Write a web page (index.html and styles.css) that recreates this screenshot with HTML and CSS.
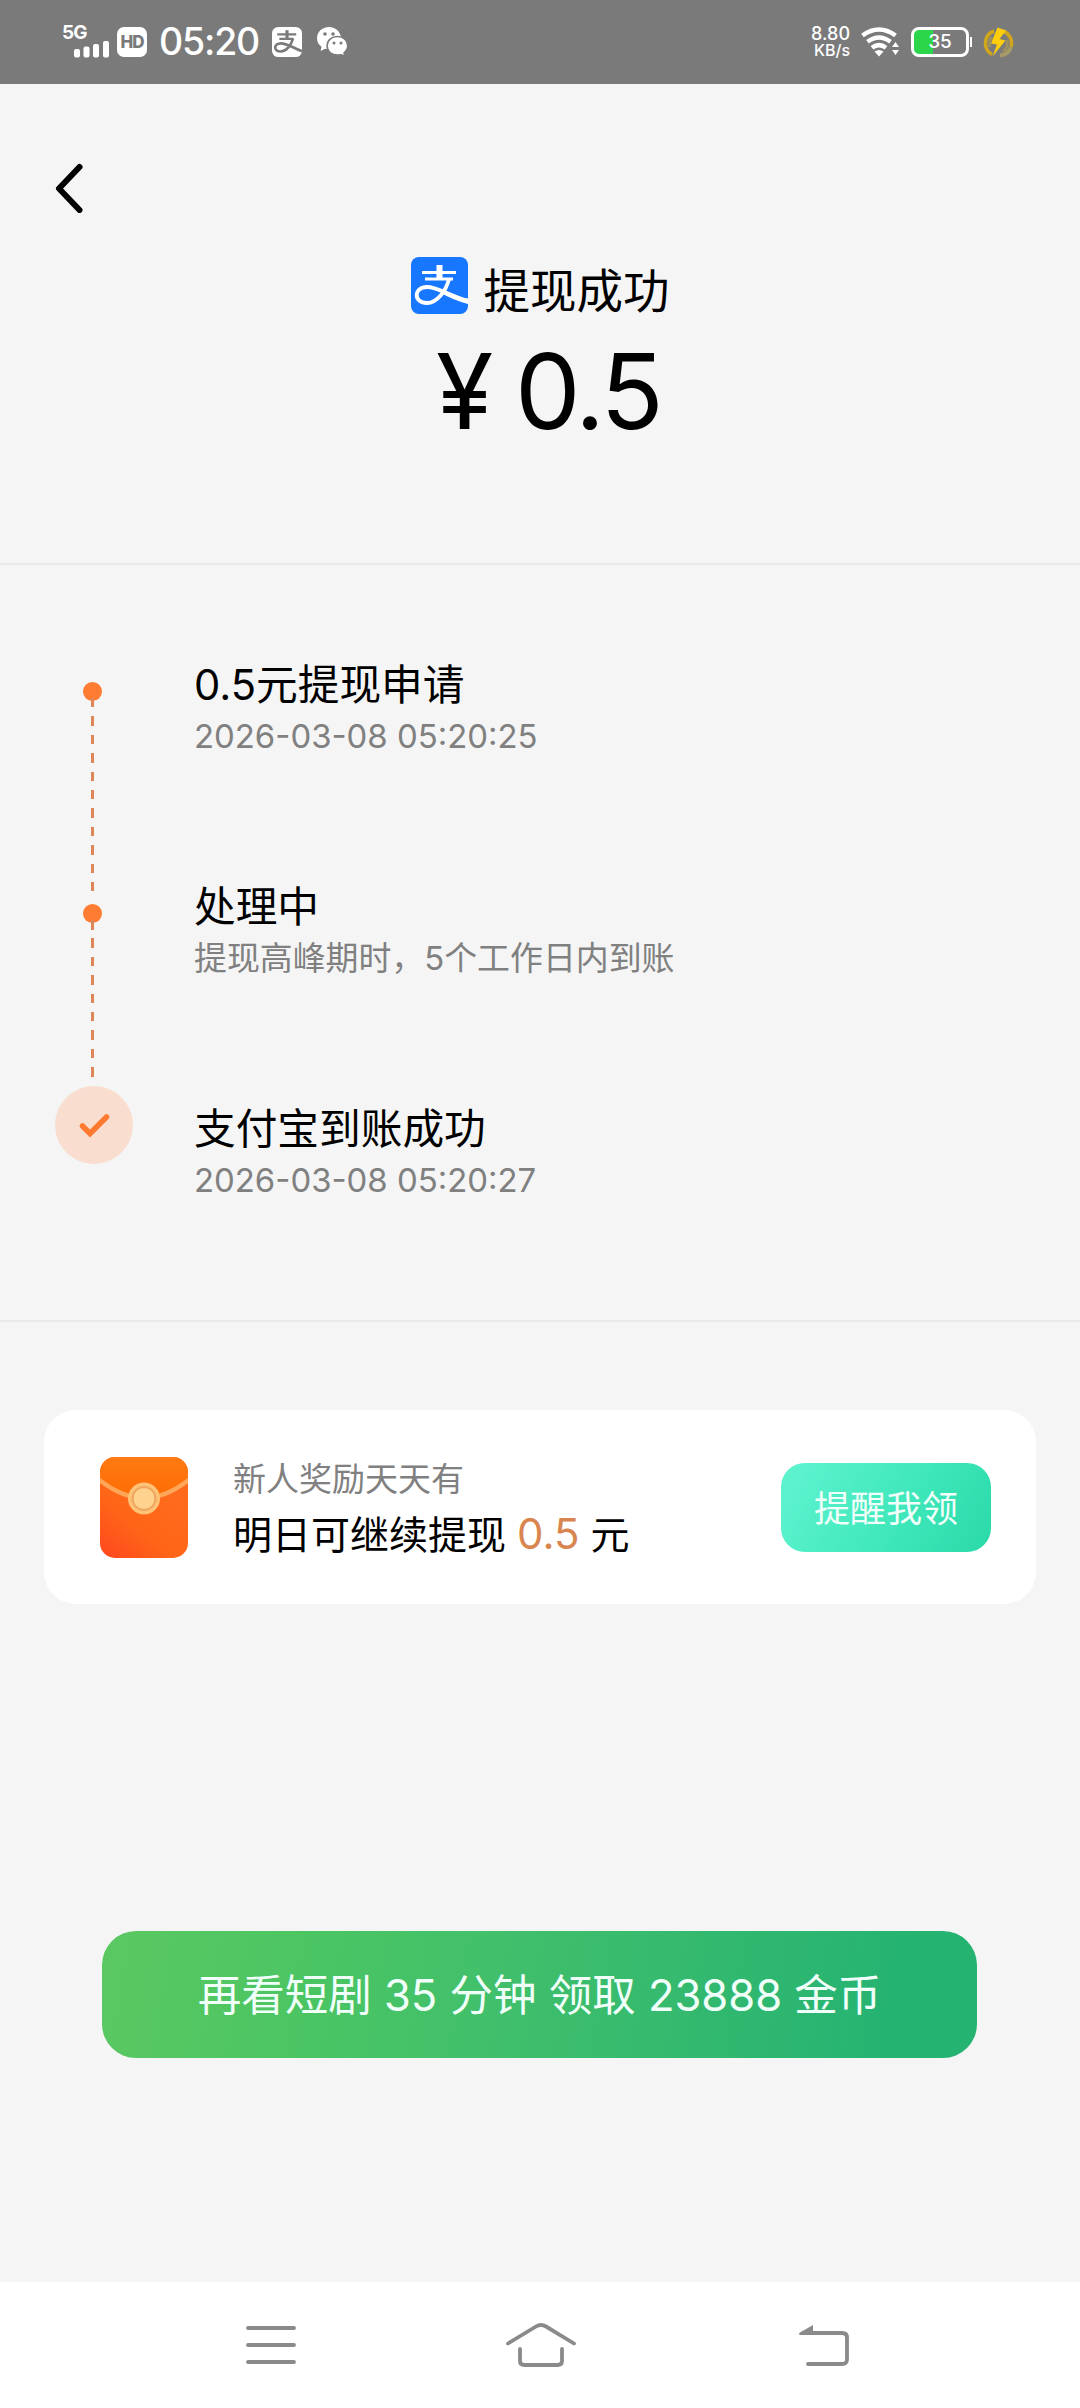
FILE: index.html
```html
<!DOCTYPE html>
<html lang="zh-CN">
<head>
<meta charset="utf-8">
<title>提现成功</title>
<link rel="stylesheet" href="styles.css">
</head>
<body>
<header class="status">
  <div class="status-left">
    <div class="cell">
      <span class="cell-type">5G</span>
      <svg class="cell-bars" width="36" height="17" viewBox="0 0 36 17" fill="#fff"><rect x="0" y="8" width="6" height="8.500" rx="2"/><rect x="9.500" y="5.500" width="6" height="11" rx="2"/><rect x="19" y="3" width="6" height="13.500" rx="2"/><rect x="29" y="0" width="6" height="16.500" rx="2"/></svg>
    </div>
    <span class="hd">HD</span>
    <span class="clock">05:20</span>
    <svg class="pay-mini" width="30" height="30" viewBox="0 0 57 57"><rect width="57" height="57" rx="12" fill="#fff"/><g fill="none" stroke="#7a7a7a"><path d="M28.500 6v15" stroke-width="6"/><path d="M10 14h36M14 22.500h27" stroke-width="4"/><path d="M40 22C36 35 27 46.500 16.500 46.500C2 46.500 3 31 17 31C29 31 38 39 57 46" stroke-width="5"/></g></svg>
    <svg class="wechat" width="31" height="30" viewBox="0 0 31 30"><path fill="#fff" d="M12 0C5 0 0 5 0 11.300c0 3.700 1.800 6.500 4.500 8.500L3.600 24l4.500-2.300c1.200.3 2.500.5 3.900.5 7 0 12-4.800 12-10.900S18.600 0 12 0z"/><path fill="#fff" stroke="#7a7a7a" stroke-width="1.500" d="M20.500 9.500c6 0 10.200 4 10.200 9.300 0 3-1.500 5.300-3.700 7l.8 3.700-3.800-1.900c-1.100.3-2.300.5-3.500.5-6 0-10.400-4-10.400-9.300s4.400-9.300 10.400-9.300z"/><g fill="#7a7a7a"><circle cx="8" cy="7" r="1.800"/><circle cx="16" cy="7" r="1.800"/><circle cx="17" cy="16" r="1.500"/><circle cx="24" cy="16" r="1.500"/></g></svg>
  </div>
  <div class="status-right">
    <div class="speed"><span>8.80</span><span class="unit">KB/s</span></div>
    <svg class="wifi" width="38" height="30" viewBox="0 0 38 30"><g fill="none" stroke="#fff" stroke-width="4.500"><path d="M1.500 8.500Q18 -3.500 34.500 8.500"/><path d="M6.500 14.800Q18 6.300 29.500 14.800"/><path d="M11 20.800Q18 15.500 25 20.800"/></g><path fill="#fff" d="M13.500 24.500Q18 21.500 22.500 24.500L18 29.500zM34.500 15l3.500 5h-7zM34.500 28l3.500-5h-7z"/></svg>
    <div class="battery"><span>35</span></div>
    <svg class="bolt" width="31" height="32" viewBox="0 0 31 32"><path d="M11 5A13 13 0 0 0 9 28.500M20 5A13 13 0 0 1 28 21" fill="none" stroke="#cfa61c" stroke-width="3.500"/><path d="M28 21A13 13 0 0 1 17 29.500" fill="none" stroke="#a69a66" stroke-width="4"/><path d="M7 21A9.500 9.500 0 0 1 9 11M24 14a9.500 9.500 0 0 1-4 11" fill="none" stroke="#9d9060" stroke-width="3"/><path fill="#fdce0e" d="M14.500 1.500L8 17.500l6 1L9.500 30.500l13-16-6-1.500 6.500-8.500z"/></svg>
  </div>
</header>

<main>
  <section class="summary">
    <svg class="back" width="28" height="50" viewBox="0 0 28 50"><path d="M24.500 4L4 25.500l20.500 21.500" fill="none" stroke="#000" stroke-width="6" stroke-linecap="round" stroke-linejoin="round"/></svg>
    <div class="headline">
      <svg class="pay" width="57" height="57" viewBox="0 0 57 57"><rect width="57" height="57" rx="8" fill="#1777ff"/><g fill="none" stroke="#fff"><path d="M28.500 8v13" stroke-width="6"/><path d="M11 15.500h34" stroke-width="3"/><path d="M14 22h28" stroke-width="3"/><path d="M38 22C35 34 26 46 16 46C2 46 2.500 30 16 30C27 30 36 38 57 44" stroke-width="3.800"/><path d="M32 34.500Q42 40 57 41.500V47Q42 43 30 36z" fill="#fff" stroke="none"/></g></svg>
      <h1>提现成功</h1>
    </div>
    <p class="amount"><span class="yen">¥</span>0.5</p>
  </section>

  <section class="steps">
    <div class="step">
      <div class="rail"><i class="dot"></i><i class="dash"></i></div>
      <div class="info"><h2>0.5元提现申请</h2><p>2026-03-08 05:20:25</p></div>
    </div>
    <div class="step">
      <div class="rail"><i class="dot"></i><i class="dash short"></i></div>
      <div class="info"><h2>处理中</h2><p>提现高峰期时，5个工作日内到账</p></div>
    </div>
    <div class="step last">
      <div class="rail"><svg class="done" width="78" height="78" viewBox="0 0 78 78"><circle cx="39" cy="39" r="39" fill="#f9ddce"/><path d="M27.500 40l7.500 7.500L51.500 31" fill="none" stroke="#ff7a30" stroke-width="5.500" stroke-linecap="round"/></svg></div>
      <div class="info"><h2>支付宝到账成功</h2><p>2026-03-08 05:20:27</p></div>
    </div>
  </section>

  <section class="card">
    <svg class="envelope" width="88" height="101" viewBox="0 0 88 101">
      <defs>
        <linearGradient id="body" x1="0" y1="1" x2=".6" y2=".2"><stop offset="0" stop-color="#ff4720"/><stop offset=".5" stop-color="#ff6517"/><stop offset="1" stop-color="#ff6a1c"/></linearGradient>
        <linearGradient id="flap" x1="0" y1="0" x2="0" y2="1"><stop offset="0" stop-color="#ff7a12"/><stop offset="1" stop-color="#ff6c05"/></linearGradient>
        <clipPath id="shape"><rect width="88" height="101" rx="15"/></clipPath>
      </defs>
      <g clip-path="url(#shape)"><rect width="88" height="101" fill="url(#body)"/><path d="M0 0h88v23Q66 41 44 41T0 23z" fill="url(#flap)"/><path d="M-2 22Q22 41 44 41T90 22" fill="none" stroke="#ffa659" stroke-width="4.500"/></g>
      <circle cx="44" cy="41.500" r="16" fill="#ffc277"/><circle cx="44" cy="41.500" r="11.500" fill="#ffd28d" stroke="#eda65e" stroke-width="2"/>
    </svg>
    <div class="reward"><p class="note">新人奖励天天有</p><p class="next">明日可继续提现 <b>0.5</b> 元</p></div>
    <button class="remind">提醒我领</button>
  </section>

  <button class="watch">再看短剧 35 分钟 领取 23888 金币</button>
</main>

<nav class="nav">
  <svg width="50" height="40" viewBox="0 0 50 40"><path d="M2 3h46M2 20h46M2 37h46" fill="none" stroke="#8a8a8a" stroke-width="3.800" stroke-linecap="round"/></svg>
  <svg class="home" width="72" height="46" viewBox="0 0 72 46"><g fill="none" stroke="#8a8a8a" stroke-width="3.800" stroke-linecap="round"><path d="M3 21.500L31 4.500Q36 1.500 41 4.500L69 21.500"/><path d="M15 27v12q0 4 4.500 4h33q4.500 0 4.500-4V27"/></g></svg>
  <svg width="52" height="44" viewBox="0 0 52 44"><path d="M5 10h39q5 0 5 4.500v22q0 4.500-5 4.500H10" fill="none" stroke="#8a8a8a" stroke-width="3.800" stroke-linecap="round"/><path d="M15 2v10H2q-2-1 0-2.500z" fill="#8a8a8a"/></svg>
</nav>
</body>
</html>
```

FILE: styles.css
```css
* { box-sizing: border-box; margin: 0; padding: 0; }

body {
  width: 1080px;
  height: 2408px;
  display: flex;
  flex-direction: column;
  background: #f5f5f5;
  color: #000;
  font-family: Inter, "Noto Sans CJK SC", sans-serif;
}

svg { display: block; flex: none; }
h1, h2, b { font-weight: 400; }
button { border: 0; font-family: inherit; color: #f0fffa; white-space: nowrap; }

.status {
  height: 84px;
  padding: 0 66px 0 62px;
  display: flex;
  justify-content: space-between;
  background: #7a7a7a;
  color: #fff;
}
.status-left, .status-right { display: flex; align-items: center; }
.cell { width: 48px; height: 34px; display: flex; flex-direction: column; align-items: flex-end; margin-right: 7px; }
.cell-type { align-self: flex-start; height: 16px; font-size: 19px; line-height: 16px; font-weight: 700; letter-spacing: -1px; }
.hd {
  width: 30px; height: 30px; border-radius: 7px; background: #fff; color: #7a7a7a;
  font-size: 17px; line-height: 30px; font-weight: 800; text-align: center; letter-spacing: -1px;
}
.clock { width: 98px; margin: 0 15px 0 12px; font-size: 37.5px; line-height: 46px; font-weight: 500; letter-spacing: -1.2px; white-space: nowrap; }
.wechat { margin-left: 15px; }
.speed { display: flex; flex-direction: column; align-items: flex-end; margin-right: 11px; font-size: 18px; line-height: 17px; font-weight: 500; }
.unit { font-size: 16px; }
.battery {
  position: relative; width: 58px; height: 30px; margin: 0 14px 0 12px;
  border: 3px solid #fff; border-radius: 8px;
  background: linear-gradient(90deg, #2bd64a 19px, transparent 19px);
  font-size: 19px; line-height: 24px; font-weight: 500; text-align: center;
}
.battery::after { content: ""; position: absolute; right: -6px; top: 7px; width: 2px; height: 10px; background: #fff; }

main { flex: 1; }

.summary { height: 481px; padding-top: 79px; border-bottom: 2px solid #eaeaea; }
.back { margin-left: 55px; }
.headline { display: flex; justify-content: center; margin-top: 44px; height: 82px; }
.headline h1 { margin: 3px 0 0 16px; font-size: 46.5px; line-height: 62px; }
.amount { height: 104px; padding-left: 436px; display: flex; font-size: 104px; line-height: 104px; letter-spacing: -3px; }
.yen { width: 79px; }

.steps { height: 757px; padding: 95px 55px 0; border-bottom: 2px solid #eaeaea; }
.step { display: flex; height: 222px; }
.rail { width: 75px; margin-right: 64px; padding-top: 22px; display: flex; flex-direction: column; align-items: center; }
.dot { flex: none; width: 19px; height: 19px; border-radius: 50%; background: #ff7c32; }
.dash { flex: none; width: 3px; height: 194px; margin-top: -3px; background: repeating-linear-gradient(180deg, #df8658 0 9.500px, transparent 9.500px 18.400px); }
.dash.short { height: 157px; }
.last .rail { width: 78px; margin-right: 61px; padding-top: 0; }
.done { margin-top: -18px; }
.info h2 { font-size: 41.7px; line-height: 50px; }
.info p { margin-top: 1px; font-size: 32.900px; line-height: 50px; color: #808080; white-space: nowrap; }

.card {
  width: 992px; height: 194px; margin: 88px 44px 0; padding: 0 45px 0 56px;
  display: flex; align-items: center; background: #fff; border-radius: 32px;
}
.reward { flex: 1; margin-left: 45px; padding-top: 7px; }
.note { font-size: 33px; line-height: 48px; color: #808080; }
.next { font-size: 39px; line-height: 62px; white-space: nowrap; }
.next b { font-size: 42px; color: #d9854f; }
.remind {
  width: 210px; height: 89px; padding-bottom: 2px; border-radius: 24px; font-size: 36px;
  background: linear-gradient(120deg, #5bf2cd 10%, #40e8bb 55%, #2ad9a8 100%);
}
.watch {
  display: block; width: 875px; height: 127px; margin: 327px 0 0 102px; padding-bottom: 5px; border-radius: 34px; font-size: 43.5px;
  background: linear-gradient(100deg, #5bc862 0%, #4bc563 24%, #41bf6b 45%, #25b372 90%);
}

.nav { height: 126px; padding-left: 246px; display: flex; align-items: center; background: #fff; }
.home { margin: 0 221px 0 209px; }
```
